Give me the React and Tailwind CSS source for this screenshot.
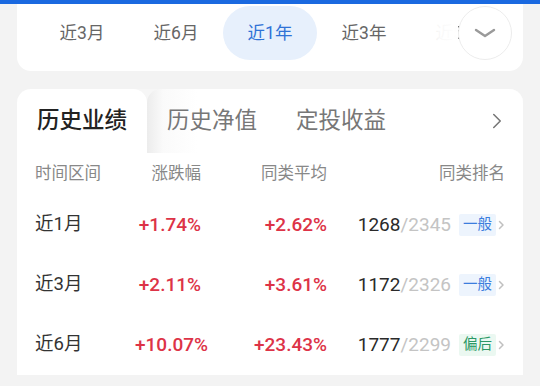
import { ChevronRight } from 'lucide-react';

const periods = ['近3月', '近6月', '近1年', '近3年', '近5年'];

const rows = [
  { label: '近1月', change: '+1.74%', avg: '+2.62%', rank: '1268', total: '2345', level: '一般' },
  { label: '近3月', change: '+2.11%', avg: '+3.61%', rank: '1172', total: '2326', level: '一般' },
  { label: '近6月', change: '+10.07%', avg: '+23.43%', rank: '1777', total: '2299', level: '偏后' },
];

const levelStyle = {
  一般: 'bg-[#edf4fd] text-[#3b7ddd]',
  偏后: 'bg-[#ebf8f1] text-[#2b9866]',
};

const App = () => {
  const active = '近1年';

  return (
    <div
      className="w-[540px] h-[386px] overflow-hidden bg-[#f3f3f3]"
      style={{ fontFamily: 'Roboto, "Noto Sans CJK SC", sans-serif' }}
    >
      {/* top bar */}
      <div className="h-[4px] bg-[#1a69e0]" />

      {/* period tabs */}
      <div className="relative mx-[17px] h-[67px] bg-white rounded-b-[14px] overflow-hidden">
        <div className="flex pt-[2px] pl-[18px]">
          {periods.map((p) => (
            <div
              key={p}
              className={`shrink-0 w-[94px] h-[54px] flex items-center justify-center rounded-full text-[17.5px] ${
                p === active ? 'bg-[#e7f0fc] text-[#2f72d6]' : 'text-[#666]'
              }`}
            >
              {p}
            </div>
          ))}
        </div>
        <div className="absolute right-[11px] top-[2px] flex items-center h-[54px]">
          <div className="w-[40px] h-[54px] bg-gradient-to-r from-white/50 via-white/95 to-white" />
          <div className="w-[54px] h-[54px] rounded-full bg-white border border-[#ececec] flex items-center justify-center">
            <svg width="22" height="10" viewBox="0 0 22 10" fill="none">
              <path d="M2 2 L11 8 L20 2" stroke="#9a9a9a" strokeWidth="2.4" strokeLinecap="round" strokeLinejoin="round" />
            </svg>
          </div>
        </div>
      </div>

      {/* performance card */}
      <div className="mx-[17px] mt-[18px] bg-white rounded-t-[14px] overflow-hidden">
        {/* header */}
        <div className="flex h-[64px] bg-[#f6f6f6]">
          <div className="w-[130px] shrink-0 bg-white rounded-t-[14px] flex items-center justify-center text-[22.5px] font-medium text-[#222]">
            历史业绩
          </div>
          <div className="flex-1 flex items-center rounded-tl-[14px] bg-[linear-gradient(to_right,#ececec,#fafafa_16px,#ffffff_50px)]">
            <div className="px-[20px] text-[22.5px] text-[#777]">历史净值</div>
            <div className="px-[19px] text-[22.5px] text-[#777]">定投收益</div>
            <ChevronRight size={26} strokeWidth={1.4} className="ml-auto mr-[13px] text-[#777]" />
          </div>
        </div>

        {/* table */}
        <div className="px-[18px]">
          <div className="grid grid-cols-[100px_66px_126px_1fr] items-center h-[42px] text-[16.5px] text-[#888]">
            <div>时间区间</div>
            <div className="text-right">涨跌幅</div>
            <div className="text-right">同类平均</div>
            <div className="text-right">同类排名</div>
          </div>

          {rows.map((r) => (
            <div key={r.label} className="grid grid-cols-[100px_66px_126px_1fr] items-center h-[60px]">
              <div className="text-[18.5px] text-[#333]">{r.label}</div>
              <div className="text-right text-[19px] font-medium text-[#dd3347] whitespace-nowrap">{r.change}</div>
              <div className="text-right text-[19px] font-medium text-[#dd3347] whitespace-nowrap">{r.avg}</div>
              <div className="flex items-center justify-end">
                <span className="text-[19px] text-[#2a2a2a]">{r.rank}</span>
                <span className="text-[19px] text-[#c4c4c4]">/{r.total}</span>
                <span className={`ml-[8px] h-[22px] px-[4px] flex items-center text-[14.5px] rounded-[2px] ${levelStyle[r.level]}`}>
                  {r.level}
                </span>
                <svg width="7" height="10" viewBox="0 0 7 10" fill="none" className="ml-[2px]">
                  <path d="M1.5 1.5 L5 5 L1.5 8.5" stroke="#c0c0c0" strokeWidth="1.5" strokeLinecap="round" strokeLinejoin="round" />
                </svg>
              </div>
            </div>
          ))}
        </div>
      </div>
    </div>
  );
};

export default App;
